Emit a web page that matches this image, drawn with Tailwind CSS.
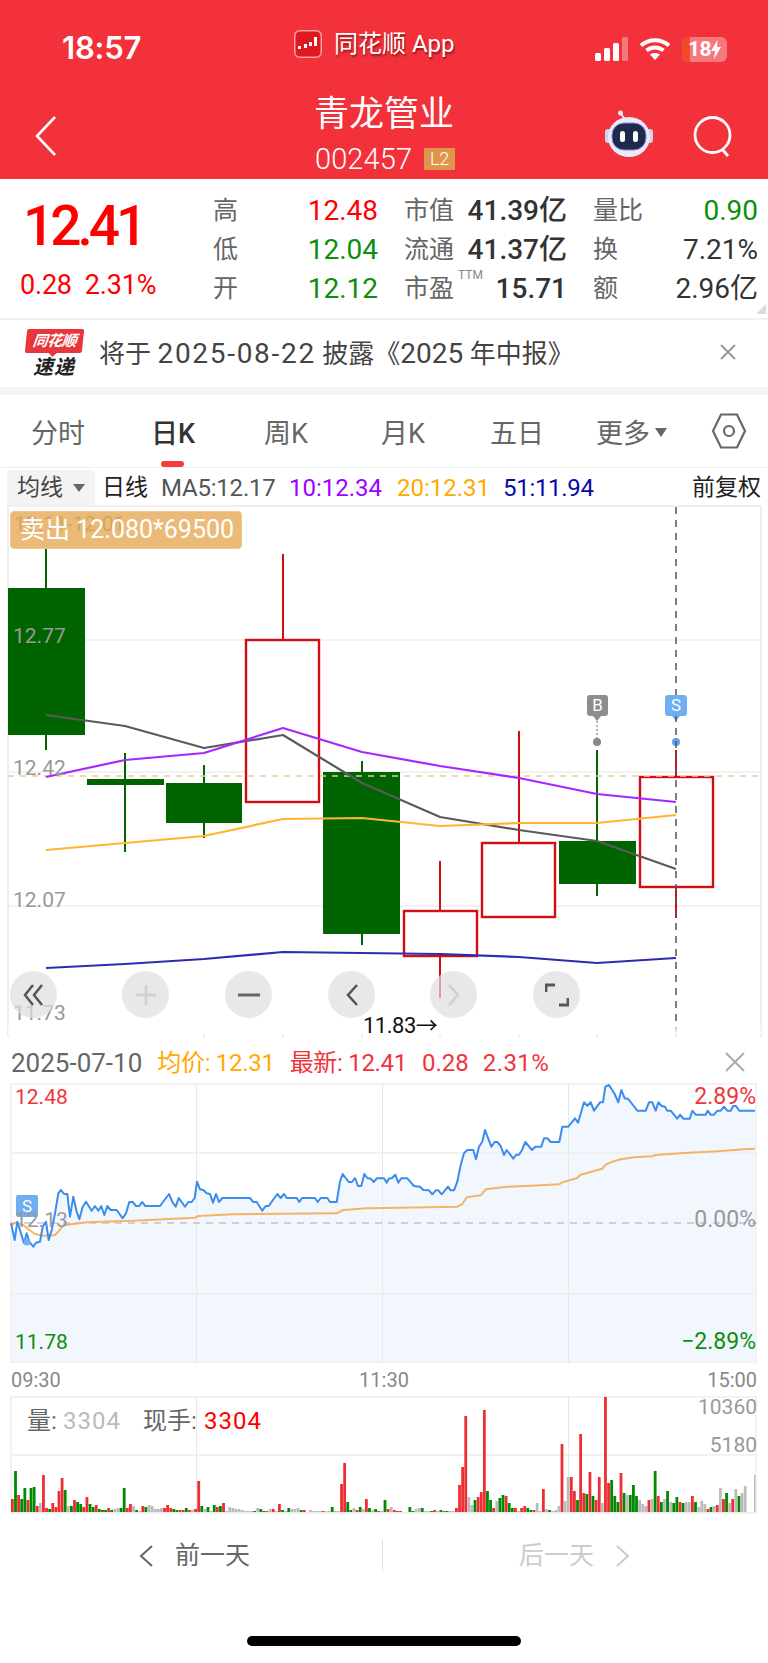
<!DOCTYPE html>
<html lang="zh-CN">
<head>
  <meta charset="UTF-8" />
  <meta name="viewport" content="width=device-width, initial-scale=1.0"/>
  <title>青龙管业</title>
  <script src="https://cdn.jsdelivr.net/npm/@tailwindcss/browser@4"></script>
</head>
<body class="bg-white">
<div class="w-[768px] h-[1663px] overflow-hidden bg-white relative font-['Roboto','Noto_Sans_CJK_SC',sans-serif]">

  <!-- red header -->
  <header class="h-[179px] bg-[#f2313b] text-white relative">
    <div class="h-[96px] flex items-start">
      <span class="ml-[62px] mt-[27px] w-[90px] text-[31px] leading-[42px] font-semibold font-['Inter','Roboto',sans-serif] tracking-[-0.2px]">18:57</span>
      <div class="ml-[142px] mt-[30px] flex items-center gap-[12px] h-[28px]">
        <svg width="28" height="28" viewBox="0 0 28 28">
          <rect x="0.75" y="0.75" width="26.5" height="26.5" rx="5" fill="#e0181f" stroke="#f7a0a2" stroke-width="1.5"/>
          <path d="M4 16h3v3H4zM10 14h3v4h-3zM15 12h3v4h-3zM20 7h3v9h-3z" fill="#fff" stroke="none"/>
        </svg>
        <span class="text-[24px] leading-[28px] [text-shadow:1px_2px_2px_rgba(90,0,0,0.6)]">同花顺 App</span>
      </div>
      <div class="ml-auto mr-[41px] mt-[36px] flex items-center gap-[11px] h-[26px]">
        <svg width="33" height="24" viewBox="0 0 33 24">
          <rect x="0" y="16" width="6" height="8" rx="1.5" fill="#fff"/>
          <rect x="9" y="11" width="6" height="13" rx="1.5" fill="#fff"/>
          <rect x="18" y="6" width="6" height="18" rx="1.5" fill="#fff"/>
          <rect x="27" y="0" width="6" height="24" rx="1.5" fill="#fff" fill-opacity="0.35"/>
        </svg>
        <svg width="32" height="24" viewBox="0 0 32 24" fill="none" stroke="#fff" stroke-width="4">
          <path d="M2 8.5C10 1.500 22 1.500 30 8.500"/>
          <path d="M7.500 13.500C12.500 9.500 19.500 9.500 24.500 13.500"/>
          <path d="M16 23l-5-5.500C14 15.500 18 15.500 21 17.500z" fill="#fff" stroke="none"/>
        </svg>
        <div class="relative w-[45px] h-[25px] rounded-[6px] bg-white/35 overflow-hidden flex items-center justify-center">
          <span class="absolute left-0 top-0 bottom-0 w-[8px] bg-[#f04a2a]"></span>
          <span class="relative text-[21px] leading-[25px] font-bold tracking-[-0.5px]">18</span>
          <svg class="relative" width="10" height="19" viewBox="0 0 10 19"><path d="M6.500 0L0 11h4l-1 8 7-12H6z" fill="#fff"/></svg>
        </div>
      </div>
    </div>
    <svg class="absolute left-[34px] top-[115px]" width="24" height="42" viewBox="0 0 24 42" fill="none" stroke="#fff" stroke-width="2.600">
      <path d="M21 2L3 21l18 19"/>
    </svg>
    <h1 class="absolute left-0 right-0 top-[93px] text-center text-[35px] leading-[44px] font-normal">青龙管业</h1>
    <div class="absolute left-[315px] top-[143px] flex items-center gap-[12px]">
      <span class="text-[29px] leading-[32px] font-light tracking-[0.1px]">002457</span>
      <span class="w-[31px] h-[22px] bg-[#e0944c] text-[18px] leading-[22px] text-center font-light">L2</span>
    </div>
    <svg class="absolute left-[604px] top-[110px]" width="50" height="48" viewBox="0 0 50 48">
      <path d="M21 10C20 6 17 6 17 3" stroke="#dfe3f2" stroke-width="2" fill="none"/>
      <circle cx="16.500" cy="3" r="2.500" fill="#e8ebf6"/>
      <rect x="1" y="19" width="6" height="14" rx="3" fill="#cfd4ea"/>
      <rect x="43" y="19" width="6" height="14" rx="3" fill="#cfd4ea"/>
      <ellipse cx="25" cy="27" rx="21" ry="20" fill="#e9ecf8"/>
      <rect x="8" y="13" width="34" height="27" rx="12" fill="#1e2a4a" stroke="#9a7ff0" stroke-width="1"/>
      <rect x="16" y="21" width="5" height="11" rx="2.500" fill="#fff"/>
      <rect x="29" y="21" width="5" height="11" rx="2.500" fill="#fff"/>
    </svg>
    <svg class="absolute left-[692px] top-[114px]" width="42" height="44" viewBox="0 0 42 44" fill="none" stroke="#fff" stroke-width="2.800">
      <circle cx="20.500" cy="21" r="17.500"/>
      <path d="M30 35l6 7"/>
    </svg>
  </header>

  <!-- quote stats -->
  <section class="h-[139px] relative flex">
    <div class="w-[213px] shrink-0 text-[#ff0000]">
      <div class="ml-[23px] mt-[15px] text-[55px] leading-[64px] font-medium tracking-[-4px]">12.41</div>
      <div class="ml-[20px] mt-[12px] flex gap-[13px] text-[27px] leading-[30px] tracking-[-0.2px]">
        <span>0.28</span><span>2.31%</span>
      </div>
    </div>
    <div class="mt-[12px] h-[117px] grid grid-cols-[165px_163px_165px] grid-rows-3 gap-x-[26px] text-[28px] leading-[39px]">
      <div class="flex justify-between"><span class="text-[25px] text-[#666]">高</span><span class="text-[#ff0000]">12.48</span></div>
      <div class="flex justify-between"><span class="text-[25px] text-[#666]">市值</span><span class="text-[#333] font-medium">41.39亿</span></div>
      <div class="flex justify-between"><span class="text-[25px] text-[#666]">量比</span><span class="text-[#0a900a]">0.90</span></div>
      <div class="flex justify-between"><span class="text-[25px] text-[#666]">低</span><span class="text-[#0a900a]">12.04</span></div>
      <div class="flex justify-between"><span class="text-[25px] text-[#666]">流通</span><span class="text-[#333] font-medium">41.37亿</span></div>
      <div class="flex justify-between"><span class="text-[25px] text-[#666]">换</span><span class="text-[#333]">7.21%</span></div>
      <div class="flex justify-between"><span class="text-[25px] text-[#666]">开</span><span class="text-[#0a900a]">12.12</span></div>
      <div class="flex justify-between relative"><span class="text-[25px] text-[#666]">市盈</span><span class="absolute left-[54px] -top-[2px] text-[12px] leading-[16px] text-[#888]">TTM</span><span class="text-[#333] font-medium">15.71</span></div>
      <div class="flex justify-between"><span class="text-[25px] text-[#666]">额</span><span class="text-[#333]">2.96亿</span></div>
    </div>
    <span class="absolute left-[756px] top-[125px] w-0 h-0 border-l-[10px] border-l-transparent border-b-[10px] border-b-[#dcdcdc]"></span>
  </section>

  <!-- notice -->
  <section class="h-[69px] border-t-2 border-[#f2f2f2] flex items-center relative">
    <div class="ml-[24px] w-[60px] h-[50px] shrink-0 flex flex-col items-center">
      <span class="relative w-[57px] h-[24px] bg-[#e8373c] rounded-[2px] -skew-x-6 text-white text-[15px] leading-[24px] font-bold italic text-center tracking-[-0.5px]">同花顺
        <span class="absolute left-[24px] -bottom-[4px] w-0 h-0 border-x-[4px] border-x-transparent border-t-[4px] border-t-[#e8373c]"></span>
      </span>
      <span class="mt-[2px] text-[#222] text-[20px] leading-[24px] font-bold italic tracking-[1px]">速递</span>
    </div>
    <span class="ml-[15px] text-[26px] leading-[36px] text-[#444]">将于 <span class="text-[28px] tracking-[1.7px]">2025-08-22</span> 披露《<span class="text-[28px]">2025</span> 年中报》</span>
    <svg class="absolute left-[720px] top-[24px]" width="16" height="16" viewBox="0 0 16 16" stroke="#999" stroke-width="2"><path d="M1 1l14 14M15 1L1 15"/></svg>
  </section>

  <div class="h-[8px] bg-[#f5f5f5]"></div>

  <!-- period tabs -->
  <nav class="h-[73px] border-b border-[#eee] relative flex items-center text-[27px] leading-[36px] text-[#666]">
    <span class="absolute left-[31px] top-[21px]">分时</span>
    <span class="absolute left-[151px] top-[21px] text-[#333] font-medium">日K</span>
    <span class="absolute left-[264px] top-[21px]">周K</span>
    <span class="absolute left-[381px] top-[21px]">月K</span>
    <span class="absolute left-[490px] top-[21px]">五日</span>
    <span class="absolute left-[596px] top-[21px]">更多</span>
    <span class="absolute left-[655px] top-[33px] w-0 h-0 border-x-[6px] border-x-transparent border-t-[9px] border-t-[#666]"></span>
    <svg class="absolute left-[711px] top-[17px]" width="36" height="38" viewBox="0 0 36 38" fill="none" stroke="#666" stroke-width="2.200">
      <path d="M10 2.500h16L34 19l-8 16.500H10L2 19z"/><circle cx="18" cy="19" r="5"/>
    </svg>
    <span class="absolute left-[161px] top-[66px] w-[23px] h-[6px] rounded-full bg-[#f53b3b]"></span>
  </nav>

  <!-- MA legend -->
  <div class="h-[39px] relative text-[24px] leading-[36px] border-b-2 border-[#eee] ml-[7px] w-[754px]">
    <div class="absolute left-0 top-[2px] w-[88px] h-[36px] bg-[#f3f3f3] rounded-[3px] flex items-center pl-[10px] gap-[10px] text-[#444] text-[23px]">均线<span class="w-0 h-0 border-x-[6px] border-x-transparent border-t-[8px] border-t-[#666]"></span></div>
    <span class="absolute left-[95px] top-[2px] text-[#222] text-[23px]">日线</span>
    <span class="absolute left-[154px] top-[2px] text-[#555] tracking-[-0.2px]">MA5:12.17</span>
    <span class="absolute left-[282px] top-[2px] text-[#a000ff]">10:12.34</span>
    <span class="absolute left-[390px] top-[2px] text-[#ffaa00]">20:12.31</span>
    <span class="absolute left-[496px] top-[2px] text-[#0a0aa8] tracking-[-0.3px]">51:11.94</span>
    <span class="absolute right-0 top-[2px] text-[#222] text-[23px]">前复权</span>
  </div>

  <!-- k line chart -->
  <section class="h-[530px] relative">
    <svg id="kline" class="absolute left-0 top-0" width="768" height="530" viewBox="0 507 768 530"></svg>
    <span class="absolute left-[14px] top-[2px] text-[21px] leading-[30px] text-[#666]">12.11-12.01</span>
    <div class="absolute left-[10px] top-[4px] w-[232px] h-[38px] rounded-[4px] bg-[#e8ae5f]/85 border border-[#f0c78e] text-white text-[25px] leading-[36px] pl-[9px]">卖出 12.080*69500</div>
    <span class="absolute left-[13px] top-[115px] text-[21px] leading-[28px] text-[#999]">12.77</span>
    <span class="absolute left-[13px] top-[247px] text-[21px] leading-[28px] text-[#999]">12.42</span>
    <span class="absolute left-[13px] top-[379px] text-[21px] leading-[28px] text-[#999]">12.07</span>
    <span class="absolute left-[13px] top-[492px] text-[21px] leading-[28px] text-[#999]">11.73</span>
    <span class="absolute left-[587px] top-[188px] w-[21px] h-[21px] rounded-[3px] bg-[#8e8e8e] text-white text-[17px] leading-[21px] text-center">B</span>
    <span class="absolute left-[665px] top-[188px] w-[22px] h-[21px] rounded-[3px] bg-[#70aef2] text-white text-[17px] leading-[21px] text-center">S</span>
    <span class="absolute left-[363px] top-[505px] text-[22px] leading-[28px] text-[#111] tracking-[-0.5px]">11.83→</span>

    <div class="absolute left-[10px] top-[464px] w-[47px] h-[47px] rounded-full bg-[#dedede]/70 flex items-center justify-center">
      <svg width="24" height="24" viewBox="0 0 24 24" fill="none" stroke="#555" stroke-width="2.500"><path d="M11 2L3 12l8 10M20 2l-8 10 8 10"/></svg>
    </div>
    <div class="absolute left-[122px] top-[464px] w-[47px] h-[47px] rounded-full bg-[#dedede]/70 flex items-center justify-center">
      <svg width="22" height="22" viewBox="0 0 22 22" stroke="#d2d2d2" stroke-width="3"><path d="M11 1v20M1 11h20"/></svg>
    </div>
    <div class="absolute left-[225px] top-[464px] w-[47px] h-[47px] rounded-full bg-[#dedede]/70 flex items-center justify-center">
      <svg width="22" height="22" viewBox="0 0 22 22" stroke="#666" stroke-width="3"><path d="M0 11h22"/></svg>
    </div>
    <div class="absolute left-[328px] top-[464px] w-[47px] h-[47px] rounded-full bg-[#dedede]/70 flex items-center justify-center">
      <svg width="14" height="24" viewBox="0 0 14 24" fill="none" stroke="#555" stroke-width="2.500"><path d="M12 2L3 12l9 10"/></svg>
    </div>
    <div class="absolute left-[430px] top-[464px] w-[47px] h-[47px] rounded-full bg-[#dedede]/70 flex items-center justify-center">
      <svg width="14" height="24" viewBox="0 0 14 24" fill="none" stroke="#cfcfcf" stroke-width="2.500"><path d="M2 2l9 10-9 10"/></svg>
    </div>
    <div class="absolute left-[533px] top-[464px] w-[47px] h-[47px] rounded-full bg-[#dedede]/70 flex items-center justify-center">
      <svg width="24" height="24" viewBox="0 0 24 24" fill="none" stroke="#555" stroke-width="2.800"><path d="M1 9V2h9M23 15v7h-9"/></svg>
    </div>
  </section>

  <!-- intraday header -->
  <div class="h-[46px] flex items-center pl-[11px] pt-[6px] text-[24px] leading-[30px] relative">
    <span class="text-[26px] text-[#666]">2025-07-10</span>
    <span class="ml-[15px] text-[#ffaa00] tracking-[-0.3px]">均价: 12.31</span>
    <span class="ml-[15px] text-[#f0343c] tracking-[-0.3px]">最新: 12.41</span>
    <span class="ml-[15px] text-[#f0343c]">0.28</span>
    <span class="ml-[14px] text-[#f0343c] tracking-[0.4px]">2.31%</span>
    <svg class="absolute left-[725px] top-[15px]" width="20" height="20" viewBox="0 0 20 20" stroke="#aaa" stroke-width="2"><path d="M1 1l18 18M19 1L1 19"/></svg>
  </div>

  <!-- intraday chart -->
  <section class="h-[280px] relative">
    <svg id="intraday" class="absolute left-0 top-0" width="768" height="280" viewBox="0 1083 768 280"></svg>
    <span class="absolute left-[15px] top-[0px] text-[21px] leading-[28px] text-[#f0343c]">12.48</span>
    <span class="absolute right-[12px] top-[0px] text-[23px] leading-[28px] text-[#f0343c]">2.89%</span>
    <span class="absolute left-[16px] top-[112px] w-[22px] h-[22px] rounded-[2px] bg-[#70aef2] text-white text-[17px] leading-[22px] text-center">S</span>
    <span class="absolute left-[15px] top-[123px] text-[21px] leading-[28px] text-[#999]">12.13</span>
    <span class="absolute right-[12px] top-[123px] text-[23px] leading-[28px] text-[#999]">0.00%</span>
    <span class="absolute left-[15px] bottom-[7px] text-[21px] leading-[28px] text-[#0a900a]">11.78</span>
    <span class="absolute right-[12px] bottom-[7px] text-[23px] leading-[28px] text-[#0a900a]">−2.89%</span>
  </section>

  <!-- time axis -->
  <div class="h-[33px] flex justify-between items-center pl-[11px] pr-[11px] text-[20px] text-[#888]">
    <span>09:30</span><span>11:30</span><span>15:00</span>
  </div>

  <!-- volume chart -->
  <section class="h-[118px] relative">
    <svg id="volume" class="absolute left-0 top-0" width="768" height="118" viewBox="0 1396 768 118"></svg>
    <span class="absolute left-[27px] top-[11px] text-[24px] leading-[28px] text-[#666]">量:</span>
    <span class="absolute left-[63px] top-[11px] text-[24px] leading-[28px] tracking-[1px] text-[#bbb]">3304</span>
    <span class="absolute left-[143px] top-[11px] text-[24px] leading-[28px] text-[#666]">现手:</span>
    <span class="absolute left-[204px] top-[11px] text-[24px] leading-[28px] tracking-[1px] text-[#ff0000]">3304</span>
    <span class="absolute right-[11px] top-[-3px] text-[21px] leading-[28px] text-[#999]">10360</span>
    <span class="absolute right-[11px] top-[35px] text-[21px] leading-[28px] text-[#999]">5180</span>
  </section>

  <!-- prev / next day -->
  <div class="mt-[26px] h-[31px] flex items-center text-[25px] leading-[31px]">
    <div class="w-[382px] flex items-center pl-[139px] text-[#666]">
      <svg width="14" height="24" viewBox="0 0 14 24" fill="none" stroke="#666" stroke-width="2"><path d="M13 2L2 12l11 10"/></svg>
      <span class="ml-[22px]">前一天</span>
    </div>
    <div class="w-px h-[31px] bg-[#ddd]"></div>
    <div class="flex items-center pl-[136px] text-[#ccc]">
      <span>后一天</span>
      <svg class="ml-[22px]" width="14" height="24" viewBox="0 0 14 24" fill="none" stroke="#ccc" stroke-width="2"><path d="M1 2l11 10L1 22"/></svg>
    </div>
  </div>

  <div class="absolute left-[247px] top-[1636px] w-[274px] h-[10px] rounded-full bg-black"></div>
</div>

<script>
  const pts = a => a.map(p => p.join(',')).join(' ');
  const line = (a, color, w) => `<polyline points="${pts(a)}" fill="none" stroke="${color}" stroke-width="${w}" stroke-linejoin="round"/>`;

  // candle chart, coordinates are page pixels
  const RED = '#d40d12', GREEN = '#006400';
  const candles = [
    [46, 8, 85, 588, 735, 549, 750, 0],
    [125, 87, 164, 779, 785, 753, 852, 0],
    [204, 166, 242, 783, 823, 765, 838, 0],
    [283, 245, 320, 639, 803, 554, 803, 1],
    [362, 323, 400, 772, 934, 761, 945, 0],
    [440, 403, 478, 910, 957, 861, 998, 1],
    [519, 481, 556, 842, 918, 731, 918, 1],
    [597, 559, 636, 841, 884, 750, 896, 0],
    [676, 639, 714, 776, 888, 750, 918, 1],
  ];
  let k = '';
  [640, 772, 906].forEach(y => k += `<path d="M8 ${y}H761" stroke="#eee" stroke-width="1.500"/>`);
  k += '<path d="M8 507V1037M761 507V1037" stroke="#eee" stroke-width="2"/>';
  [204, 283, 362, 440, 519, 597, 676].forEach(x => k += `<path d="M${x} 1032V1037" stroke="#ddd"/>`);
  candles.forEach(([x, l, r, t, b, hi, lo, up]) => {
    const c = up ? RED : GREEN;
    k += `<path d="M${x} ${hi}V${t}M${x} ${b}V${lo}" stroke="${c}" stroke-width="2"/>`;
    if (up) k += `<rect x="${l + 1}" y="${t + 1}" width="${r - l - 2}" height="${b - t - 2}" fill="#fff" stroke="${c}" stroke-width="2.400"/>`;
    else k += `<rect x="${l}" y="${t}" width="${r - l}" height="${b - t}" fill="${c}"/>`;
    if (!up && x === 125) k += `<path d="M${x} ${t}V${b}" stroke="${c}" stroke-width="2"/>`;
  });
  k += '<path d="M8 776H761" stroke="#e9c9a0" stroke-width="1.500" stroke-dasharray="6 6"/>';
  k += line([[46,715],[125,726],[204,748],[283,735],[362,783],[440,817],[519,830],[597,841],[676,869]], '#5a5a5a', 2.2);
  k += line([[46,777],[125,760],[204,753],[283,728],[362,752],[440,766],[519,778],[597,794],[676,802]], '#a726ff', 2.2);
  k += line([[46,850],[125,843],[204,836],[283,819],[362,818],[440,826],[519,823],[597,823],[676,815]], '#ffb52e', 2.2);
  k += line([[46,968],[125,964],[204,959],[283,952],[362,953],[440,954],[519,957],[597,963],[676,958]], '#2c2cb0', 2.2);
  k += '<path d="M593 716L601 716L597 721Z" fill="#8e8e8e"/><path d="M597 721V738" stroke="#999" stroke-width="1.500" stroke-dasharray="2 2"/><circle cx="597" cy="742" r="4" fill="#888"/>';
  k += '<path d="M672 716L680 716L676 721Z" fill="#70aef2"/><circle cx="676" cy="742" r="4" fill="#5fa2ee"/>';
  k += '<path d="M676 507V1037" stroke="#555" stroke-width="1.500" stroke-dasharray="7 6"/>';
  k += '<defs><linearGradient id="fade" x1="0" y1="0" x2="0" y2="1"><stop offset="0" stop-color="#fff" stop-opacity="0"/><stop offset="1" stop-color="#fff"/></linearGradient></defs><rect x="8" y="1020" width="753" height="14" fill="url(#fade)"/>';
  document.getElementById('kline').innerHTML = k;

  // intraday: points read off the chart at 3x, x/3 and 1070+y/3
  const scale = (a, ox) => a.map(([x, y]) => [+(ox + x / 3).toFixed(1), +(1070 + y / 3).toFixed(1)]);
  const priceL = [[33,460],[44,510],[52,455],[60,480],[72,520],[80,490],[88,515],[100,530],[108,518],[120,515],[128,470],[138,455],[146,510],[155,480],[165,430],[175,370],[183,360],[192,372],[202,372],[210,440],[220,380],[230,425],[238,448],[248,410],[258,395],[275,422],[285,408],[295,422],[304,408],[313,435],[322,408],[332,420],[350,420],[368,445],[378,430],[388,396],[398,396],[408,408],[418,408],[426,396],[436,408],[480,408],[507,372],[518,398],[527,410],[536,384],[555,410],[565,396],[575,396],[584,384],[591,335],[600,358],[610,360],[620,370],[630,372],[639,398],[648,372],[657,396],[667,384],[750,384],[760,396],[770,396],[787,422],[797,408],[806,408],[832,372],[842,384],[852,372],[860,384],[890,384],[898,396],[906,384],[945,384],[953,396],[962,384],[982,384],[990,396],[1010,396],[1020,335],[1028,312],[1046,336],[1056,336],[1065,324],[1074,348],[1084,348],[1093,312],[1102,324],[1112,326],[1121,336],[1130,325],[1152,325]];
  const priceR = [[8,338],[14,326],[24,324],[34,314],[43,338],[52,325],[70,325],[90,348],[108,350],[118,360],[135,361],[145,373],[155,361],[163,361],[173,373],[192,350],[200,361],[210,361],[220,335],[230,285],[240,250],[250,240],[268,240],[276,268],[285,230],[295,215],[303,180],[322,230],[332,216],[340,216],[350,228],[360,255],[368,240],[388,266],[396,254],[405,254],[414,240],[424,216],[444,240],[454,230],[472,230],[480,205],[490,205],[500,216],[526,216],[535,170],[553,170],[573,145],[582,158],[600,97],[610,107],[620,97],[630,122],[648,97],[657,97],[664,50],[675,45],[692,72],[703,97],[712,60],[722,85],[733,87],[760,122],[785,122],[795,97],[805,97],[815,122],[823,97],[833,108],[843,110],[850,122],[860,122],[880,146],[888,134],[898,146],[917,146],[925,122],[935,134],[965,134],[971,122],[980,134],[990,134],[1000,122],[1010,122],[1020,110],[1030,122],[1040,122],[1048,108],[1056,108],[1066,122],[1113,122]];
  const avgL = [[33,465],[48,458],[70,465],[85,478],[105,492],[130,497],[165,495],[175,485],[190,466],[260,457],[400,452],[585,443],[595,438],[700,433],[1010,430],[1030,420],[1100,415],[1152,414]];
  const avgR = [[220,410],[235,402],[248,382],[290,376],[305,358],[370,350],[470,346],[525,343],[535,337],[580,324],[590,314],[620,306],[655,296],[665,284],[680,277],[710,268],[750,262],[805,259],[815,255],[900,249],[1000,244],[1080,238],[1113,236]];
  const price = scale(priceL, 0).concat(scale(priceR, 384));
  const avg = scale(avgL, 0).concat(scale(avgR, 384));
  let d = `<polygon points="11,1363 ${pts(price)} 755,1363" fill="#f2f7fe"/>`;
  d += '<path d="M10 1084H757M10 1153H757M10 1294H757M10 1363H757M11 1083V1363M756 1083V1363" stroke="#eee" stroke-width="1.500" fill="none"/>';
  d += '<path d="M196.500 1083V1363M382.500 1083V1363M568.500 1083V1363" stroke="#e6e8ec" fill="none"/>';
  d += '<path d="M11 1223H757" stroke="#aaa" stroke-width="1.200" stroke-dasharray="7 6"/>';
  d += line(avg, '#f5b366', 2) + line(price, '#3b8ced', 2);
  d += '<circle cx="27" cy="1242" r="3.500" fill="#70aef2"/>';
  document.getElementById('intraday').innerHTML = d;

  // volume bars, height in px, one every 3.1px
  const vols = 'r13 g41 r17 g13 g24 r12 g24 g25 r6 s9 r37 r4 g3 r9 r5 r21 r34 g22 s6 g6 r12 g10 g8 r5 r15 g8 g5 r7 g3 g2 g2 r4 g2 s3 s4 g4 g24 r4 r8 s6 g2 s1 r6 g5 s7 s6 s3 s3 s4 r4 r7 r4 g3 g2 r2 r2 g4 r2 s2 r3 r31 g6 s3 g5 s1 g7 r5 g6 r9 s1 s5 s4 s3 s3 s2 s1 s1 s1 g1 s4 g3 g1 r1 s3 r3 s1 r8 g2 s1 g4 s3 s3 s4 g2 r2 s0 s2 s1 s1 s1 r1 s1 s1 g5 s1 s1 r28 r49 g10 g2 s4 r2 g5 s3 r13 g4 s2 g3 r1 s1 g12 r3 s5 r2 r1 r1 s0 s0 g5 g1 s3 s4 g4 s1 s1 g1 r2 s1 g2 r1 g1 s1 s1 r4 r27 r45 r96 s15 s7 g12 r15 r20 r102 g21 g12 r4 s11 g14 g17 r16 g9 g4 r4 s1 r4 r6 g4 g2 r2 s9 s1 r23 s3 g2 s1 s2 s6 r68 s11 s35 r35 r21 g12 r78 r19 g18 r40 g16 r12 r35 s9 r115 r29 g32 g16 g10 r39 g19 s17 g17 g27 g16 s12 s8 s6 r12 s13 g41 r16 g10 s13 g21 s10 g9 g15 r10 g9 s10 s10 r16 g10 s5 s11 s8 r3 g5 s6 r7 s24 r13 g19 s9 r13 s23 g16 s19 s26'.split(' ');
  const barColor = { r: '#ee2e33', g: '#008a00', s: '#bbb' };
  let v = '<path d="M10 1397H757M10 1455H757M10 1513H757M11 1396V1514M756 1396V1514" stroke="#eee" stroke-width="1.500" fill="none"/>';
  v += '<path d="M196.500 1396V1514M568.500 1396V1514" stroke="#e8e8e8" fill="none"/>';
  vols.forEach((b, i) => {
    const h = +b.slice(1);
    v += `<rect x="${(11 + i * 3.105).toFixed(2)}" y="${1512 - h}" width="2.800" height="${h}" fill="${barColor[b[0]]}"/>`;
  });
  v += '<rect x="754" y="1475" width="1.500" height="37" fill="#bbb"/>';
  document.getElementById('volume').innerHTML = v;
</script>
</body>
</html>
